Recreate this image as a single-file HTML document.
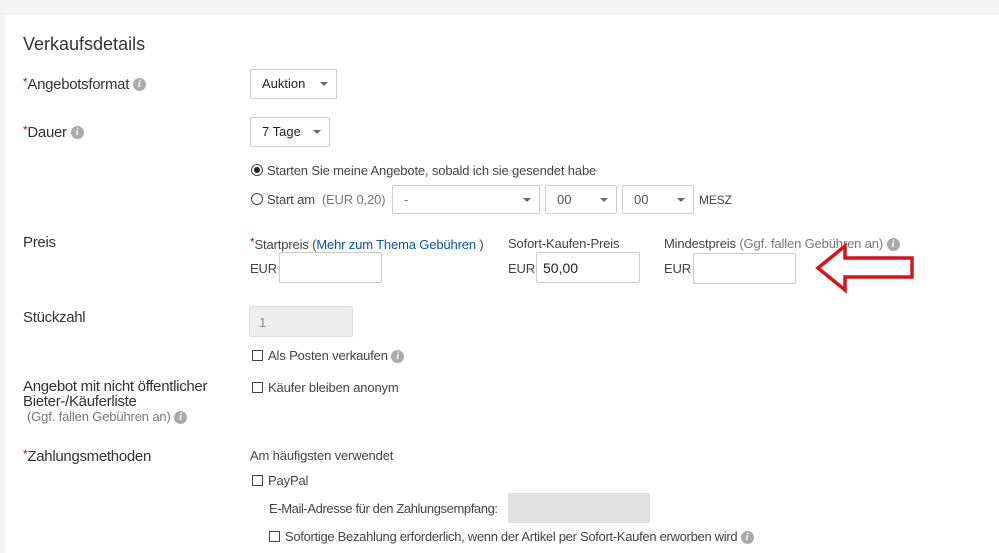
<!DOCTYPE html>
<html><head><meta charset="utf-8"><style>
*{margin:0;padding:0;box-sizing:border-box}
body{width:999px;height:553px;background:#f3f3f3;font-family:"Liberation Sans",Arial,sans-serif;color:#333;position:relative;overflow:hidden}
.panel{position:absolute;left:5px;top:15px;width:994px;height:538px;background:#fff}
.a{position:absolute;white-space:nowrap}
.lbl{font-size:15px;color:#333;letter-spacing:-0.3px}
.s{font-size:13px;color:#444;letter-spacing:-0.15px}
.g{color:#777}
.r{color:#d00;font-size:12px;vertical-align:3px}
.i{display:inline-block;width:13px;height:13px;border-radius:50%;background:#aaa;color:#fff;font-size:10px;font-style:italic;font-weight:bold;text-align:center;line-height:13px;vertical-align:top;margin-top:2px;font-family:"Liberation Serif",serif;letter-spacing:0}
.lbl .i{margin-top:3px}
.box{position:absolute;border:1px solid #ccc;border-radius:2px;background:#fff}
.sel{font-size:13px;color:#222;padding-left:11px;line-height:28px}
.car{position:absolute;right:8px;top:12px;width:0;height:0;border-left:4px solid transparent;border-right:4px solid transparent;border-top:4px solid #666}
.cb{display:inline-block;width:11px;height:11px;border:1px solid #444;vertical-align:-1px;margin-right:5px;background:#fff}
.rad{display:inline-block;width:12px;height:12px;border:1px solid #444;border-radius:50%;vertical-align:-1px;margin-right:4px;position:relative}
</style></head><body>
<div class="panel"></div>
<div class="a" style="left:23px;top:34px;font-size:18px;color:#333">Verkaufsdetails</div>

<div class="a lbl" style="left:23px;top:75px"><span class="r">*</span>Angebotsformat <span class="i">i</span></div>
<div class="box sel" style="left:250px;top:69px;width:87px;height:30px">Auktion<span class="car"></span></div>

<div class="a lbl" style="left:23px;top:123px"><span class="r">*</span>Dauer <span class="i">i</span></div>
<div class="box sel" style="left:250px;top:117px;width:80px;height:30px">7 Tage<span class="car"></span></div>

<div class="a s" style="left:251px;top:163px"><span class="rad"><span style="position:absolute;left:2px;top:2px;width:6px;height:6px;border-radius:50%;background:#222"></span></span>Starten Sie meine Angebote, sobald ich sie gesendet habe</div>
<div class="a s" style="left:251px;top:192px"><span class="rad"></span>Start am&nbsp; <span class="g">(EUR 0,20)</span></div>
<div class="box sel" style="left:392px;top:185px;width:148px;height:29px;color:#777">-<span class="car"></span></div>
<div class="box sel" style="left:545px;top:185px;width:72px;height:29px;color:#555">00<span class="car"></span></div>
<div class="box sel" style="left:622px;top:185px;width:72px;height:29px;color:#555">00<span class="car"></span></div>
<div class="a s" style="left:699px;top:193px;font-size:12px">MESZ</div>

<div class="a lbl" style="left:23px;top:234px">Preis</div>
<div class="a s" style="left:250px;top:235px"><span class="r">*</span>Startpreis (<span style="color:#0654ba">Mehr zum Thema Gebühren</span> )</div>
<div class="a s" style="left:250px;top:261px">EUR</div>
<div class="box" style="left:279px;top:252px;width:103px;height:31px"></div>
<div class="a s" style="left:508px;top:236px">Sofort-Kaufen-Preis</div>
<div class="a s" style="left:508px;top:261px">EUR</div>
<div class="box" style="left:536px;top:252px;width:104px;height:31px;font-size:14px;color:#222;padding:7px 0 0 6px">50,00</div>
<div class="a s" style="left:664px;top:236px">Mindestpreis <span class="g">(Ggf. fallen Gebühren an)</span> <span class="i">i</span></div>
<div class="a s" style="left:664px;top:261px">EUR</div>
<div class="box" style="left:693px;top:253px;width:103px;height:31px"></div>
<svg class="a" style="left:810px;top:240px" width="110" height="56"><polygon points="8,28 35,6 35,18 102,18 102,37 35,37 35,50" fill="none" stroke="#e0101a" stroke-width="3.5" stroke-linejoin="miter"/></svg>

<div class="a lbl" style="left:23px;top:309px">Stückzahl</div>
<div class="box" style="left:249px;top:306px;width:104px;height:31px;background:#eee;border-color:#ddd;font-size:13px;color:#888;padding:8px 0 0 9px">1</div>
<div class="a s" style="left:252px;top:348px"><span class="cb"></span>Als Posten verkaufen <span class="i">i</span></div>

<div class="a lbl" style="left:23px;top:379px;line-height:15px">Angebot mit nicht öffentlicher<br>Bieter-/Käuferliste</div>
<div class="a s g" style="left:27px;top:409px">(Ggf. fallen Gebühren an) <span class="i">i</span></div>
<div class="a s" style="left:252px;top:380px"><span class="cb"></span>Käufer bleiben anonym</div>

<div class="a lbl" style="left:23px;top:447px"><span class="r">*</span>Zahlungsmethoden</div>
<div class="a s" style="left:250px;top:448px">Am häufigsten verwendet</div>
<div class="a s" style="left:252px;top:473px"><span class="cb"></span>PayPal</div>
<div class="a s" style="left:269px;top:501px;letter-spacing:-0.4px">E-Mail-Adresse für den Zahlungsempfang:</div>
<div class="box" style="left:508px;top:493px;width:142px;height:30px;background:#e0e0e0;border-color:#e0e0e0"></div>
<div class="a s" style="left:269px;top:529px;letter-spacing:-0.3px"><span class="cb"></span>Sofortige Bezahlung erforderlich, wenn der Artikel per Sofort-Kaufen erworben wird <span class="i">i</span></div>
</body></html>
